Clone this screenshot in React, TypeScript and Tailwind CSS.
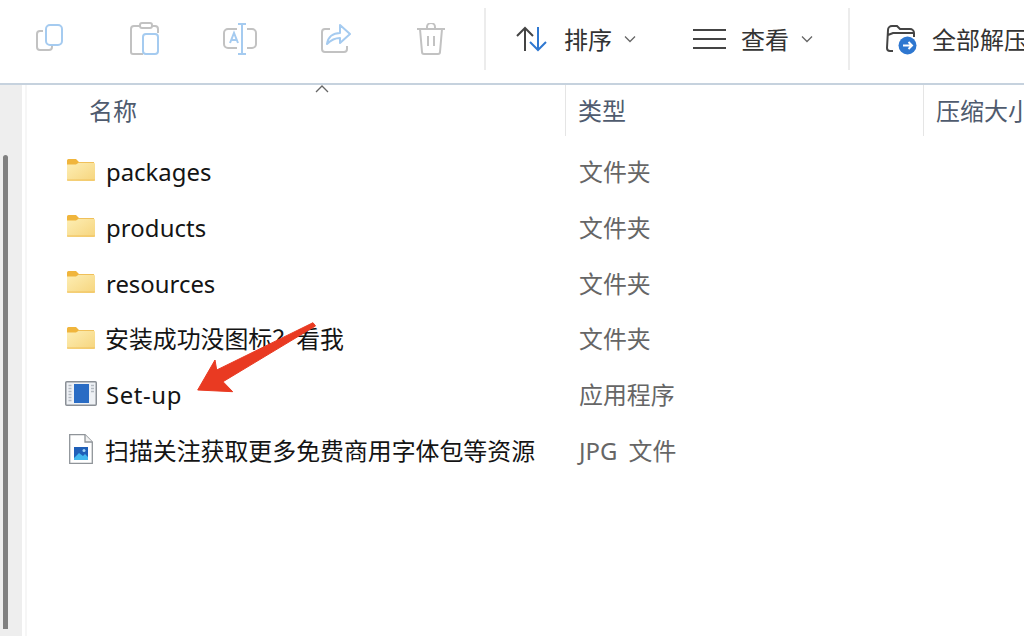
const FONT = "font-['Noto_Sans','Noto_Sans_CJK_SC',sans-serif]";

const Folder = () => (
  <svg className="shrink-0" width="28" height="22" viewBox="0 0 28 22">
    <defs>
      <linearGradient id="fg" x1="0" y1="0" x2="1" y2="1">
        <stop offset="0" stopColor="#fdeeb4" />
        <stop offset="1" stopColor="#f6d57e" />
      </linearGradient>
    </defs>
    <path d="M0 1.500a1.500 1.500 0 0 1 1.500-1.500h7.500l3 3v3h-12z" fill="#f0b53c" />
    <path d="M0 5.500h9l3-2h14.500a1.500 1.500 0 0 1 1.500 1.500v15.500a1.500 1.500 0 0 1-1.500 1.500h-25a1.500 1.500 0 0 1-1.500-1.500z" fill="url(#fg)" />
    <path d="M0 21h28" stroke="#f0c05a" strokeWidth="1" />
    <path d="M12 3.500h15" stroke="#f0c05a" strokeWidth="1" />
  </svg>
);

const ExeIcon = () => (
  <svg className="shrink-0" width="32" height="25" viewBox="0 0 32 25">
    <rect x="0.750" y="0.750" width="30.500" height="23.500" rx="1" fill="#eef1f5" stroke="#8a8f96" strokeWidth="1.500" />
    <rect x="9" y="3" width="15" height="19" fill="#2a6cc4" />
    <path d="M3.500 4.500h3M3.500 7.500h3M3.500 10.500h3M3.500 13.500h3M3.500 16.500h3M3.500 19.500h3M26 4.500h3M26 7.500h3M26 10.500h3" stroke="#b4bac2" strokeWidth="1.500" />
  </svg>
);

const JpgIcon = () => (
  <svg className="shrink-0" width="24" height="30" viewBox="0 0 24 30">
    <path d="M0.700 0.700h15.300l7.300 7.300v21.300h-22.600z" fill="#ffffff" stroke="#8f9499" strokeWidth="1.300" />
    <path d="M16 0.700v7.300h7.300" fill="#f1f1f1" stroke="#8f9499" strokeWidth="1.300" />
    <rect x="5" y="13" width="14" height="13" fill="#1f5fb8" />
    <path d="M5 26v-2l5-5 4 3 2-2 3 3v3z" fill="#42b7ee" />
    <circle cx="15" cy="16.500" r="1.500" fill="#9ed4f5" />
  </svg>
);

const rows = [
  { name: "packages", type: "文件夹", icon: <Folder />, nameClass: "pl-px" },
  { name: "products", type: "文件夹", icon: <Folder />, nameClass: "pl-px tracking-[0.1px]" },
  { name: "resources", type: "文件夹", icon: <Folder />, nameClass: "pl-px" },
  { name: "安装成功没图标？看我", type: "文件夹", icon: <Folder />, nameClass: "" },
  { name: "Set-up", type: "应用程序", icon: <ExeIcon />, nameClass: "pl-px tracking-[0.6px]" },
  { name: "扫描关注获取更多免费商用字体包等资源", type: "JPG 文件", icon: <JpgIcon />, nameClass: "" },
];

const Toolbar = () => (
  <div className="flex h-[83px] shrink-0 items-center bg-white pb-[5px]">
    <div className="flex w-[484px] shrink-0 items-center pl-[35px]">
      <svg className="shrink-0" width="30" height="30" viewBox="0 0 30 30" fill="none" strokeWidth="2">
        <path d="M8 7h-3a3 3 0 0 0-3 3v13a3 3 0 0 0 3 3h9a3 3 0 0 0 3-3v-1" stroke="#c2c2c2" />
        <rect x="11" y="1" width="16" height="20" rx="4" stroke="#a5cbf0" />
      </svg>
      <svg className="ml-[65px] shrink-0" width="30" height="34" viewBox="0 0 30 34" fill="none" strokeWidth="2">
        <path d="M10 4h-6a3 3 0 0 0-3 3v23a2 2 0 0 0 2 2h10M21 4h4a3 3 0 0 1 3 3v4" stroke="#c2c2c2" />
        <rect x="10" y="1" width="12" height="5" rx="2" stroke="#c2c2c2" />
        <rect x="13" y="12" width="15" height="20" rx="3" stroke="#a5cbf0" />
      </svg>
      <svg className="ml-[63px] shrink-0" width="34" height="32" viewBox="0 0 34 32" fill="none" strokeWidth="2">
        <path d="M14 6h-9a4 4 0 0 0-4 4v11a4 4 0 0 0 4 4h9M24 6h5a4 4 0 0 1 4 4v11a4 4 0 0 1-4 4h-5" stroke="#c2c2c2" />
        <path d="M15 1h8M19 1v30M15 31h8M7 20l4-10 4 10M8.500 17h5" stroke="#a5cbf0" />
      </svg>
      <svg className="ml-[64px] shrink-0" width="30" height="30" viewBox="0 0 30 30" fill="none" strokeWidth="2">
        <path d="M9 5h-5a3 3 0 0 0-3 3v17a3 3 0 0 0 3 3h19a3 3 0 0 0 3-3v-3" stroke="#c2c2c2" />
        <path d="M19 1l10 9-10 9v-5c-6 0-9 2-13 6 1-7 6-11 13-11z" stroke="#a5cbf0" strokeLinejoin="round" />
      </svg>
      <svg className="ml-[65px] shrink-0" width="30" height="32" viewBox="0 0 30 32" fill="none" stroke="#c2c2c2" strokeWidth="2">
        <path d="M1 6h28M11 6v-2a3 3 0 0 1 8 0v2M4 6l2 23a2 2 0 0 0 2 2h14a2 2 0 0 0 2-2l2-23M12 13v10M18 13v10" />
      </svg>
    </div>
    <div className="h-[62px] w-0.5 shrink-0 bg-[#ececec]" />
    <div className="flex w-[362px] shrink-0 items-center pl-[30px]">
      <svg className="shrink-0" width="32" height="26" viewBox="0 0 32 26" fill="none" strokeWidth="2">
        <path d="M9 25V2M1 10l8-8 8 8" stroke="#444444" />
        <path d="M22 1v23M14 16l8 8 8-8" stroke="#2e77d0" />
      </svg>
      <span className="ml-[16px] mt-[2px] text-[24px] leading-none text-[#333333]">排序</span>
      <svg className="ml-[12px] shrink-0" width="12" height="8" viewBox="0 0 12 8" fill="none" stroke="#666666" strokeWidth="1.300">
        <path d="M1 1.500l5 5 5-5" />
      </svg>
      <div className="ml-[57px] flex h-[20px] w-[33px] flex-col justify-between">
        <div className="h-0.5 bg-[#444444]" />
        <div className="h-0.5 bg-[#444444]" />
        <div className="h-0.5 bg-[#444444]" />
      </div>
      <span className="ml-[15px] mt-[2px] text-[24px] leading-none text-[#333333]">查看</span>
      <svg className="ml-[12px] shrink-0" width="12" height="8" viewBox="0 0 12 8" fill="none" stroke="#666666" strokeWidth="1.300">
        <path d="M1 1.500l5 5 5-5" />
      </svg>
    </div>
    <div className="h-[62px] w-0.5 shrink-0 bg-[#ececec]" />
    <div className="flex items-center whitespace-nowrap pl-[35px]">
      <svg className="shrink-0" width="32" height="31" viewBox="0 0 32 31" fill="none">
        <path d="M8 27h-3a3 3 0 0 1-3-3l1-18a4 4 0 0 1 4-4h5l3 3h10a4 4 0 0 1 4 4v4M3 11l5-2h20" stroke="#444444" strokeWidth="2" />
        <circle cx="22.500" cy="21.500" r="9" fill="#2e77d0" />
        <path d="M18 21.500h9M23.500 18l3.500 3.500-3.500 3.500" stroke="#ffffff" strokeWidth="2" />
      </svg>
      <span className="ml-[15px] mt-[2px] text-[24px] leading-none text-[#333333]">全部解压缩</span>
    </div>
  </div>
);

const App = () => {
  return (
    <div className={`relative flex h-[636px] w-[1024px] flex-col overflow-hidden bg-white ${FONT}`}>
      <Toolbar />
      <div className="h-0.5 shrink-0 bg-[#c6d2de]" />
      <div className="flex min-h-0 flex-1">
        <div className="w-[22px] shrink-0 bg-[#eeeeee] pl-[3px] pt-[70px]">
          <div className="h-[474px] w-[5px] rounded-t-sm bg-[#808080]" />
        </div>
        <div className="ml-[3px] w-[2px] shrink-0 bg-[#f6f6f6]" />
        <div className="min-w-0 flex-1">
          <div className="relative flex h-[51px] items-start text-[24px] leading-none text-[#4f5b6e]">
            <div className="flex h-full w-[539px] shrink-0 items-center border-r border-[#e5e5e5] pl-[62px]">名称</div>
            <div className="flex h-full w-[358px] shrink-0 items-center border-r border-[#e5e5e5] pl-[12px]">类型</div>
            <div className="flex h-full items-center whitespace-nowrap pl-[12px]">压缩大小</div>
            <svg className="absolute left-[288px] top-[0px]" width="14" height="8" viewBox="0 0 14 8" fill="none" stroke="#666666" strokeWidth="1.300">
              <path d="M1 7l6-6 6 6" />
            </svg>
          </div>
          <div className="pt-[8px]">
            {rows.map((row) => (
              <div key={row.name} className="flex h-[55.8px] items-center text-[23.9px] leading-none">
                <div className="mb-[3px] flex w-[78px] shrink-0 justify-center pl-[30px]">{row.icon}</div>
                <div className={`w-[474px] shrink-0 whitespace-nowrap text-[#141414] ${row.nameClass}`}>{row.name}</div>
                <div className="text-[#666666] [word-spacing:5px]">{row.type}</div>
              </div>
            ))}
          </div>
        </div>
      </div>
      <svg className="absolute left-[190px] top-[315px]" width="130" height="80" viewBox="0 0 130 80">
        <path d="M123 7.700 L125.500 11 L33 66.700 L42.700 76.700 L7.700 75 L25 45 L26.700 55 Z" fill="#e93a22" stroke="#e93a22" strokeWidth="1" strokeLinejoin="round" />
      </svg>
    </div>
  );
};

export default App;
